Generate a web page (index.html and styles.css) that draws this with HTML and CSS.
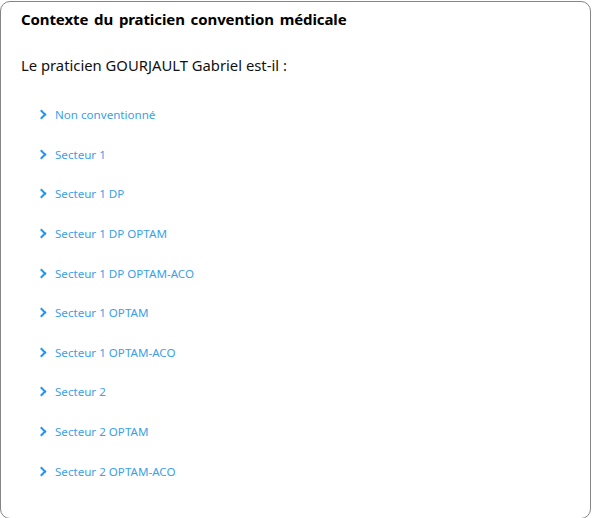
FILE: index.html
```html
<!DOCTYPE html>
<html lang="fr">
<head>
  <meta charset="UTF-8" />
  <title>Contexte du praticien convention médicale</title>
  <link rel="stylesheet" href="styles.css">
</head>
<body>
  <div class="dialog">
    <div class="title">Contexte du praticien convention médicale</div>
    <p class="question">Le praticien GOURJAULT Gabriel est-il :</p>

    <ul class="choices">
      <li><span class="chevron"></span>Non conventionné</li>
      <li><span class="chevron"></span>Secteur 1</li>
      <li><span class="chevron"></span>Secteur 1 DP</li>
      <li><span class="chevron"></span>Secteur 1 DP OPTAM</li>
      <li><span class="chevron"></span>Secteur 1 DP OPTAM-ACO</li>
      <li><span class="chevron"></span>Secteur 1 OPTAM</li>
      <li><span class="chevron"></span>Secteur 1 OPTAM-ACO</li>
      <li><span class="chevron"></span>Secteur 2</li>
      <li><span class="chevron"></span>Secteur 2 OPTAM</li>
      <li><span class="chevron"></span>Secteur 2 OPTAM-ACO</li>
    </ul>
  </div>
</body>
</html>
```

FILE: styles.css
```css
* {
  box-sizing: border-box;
}

body {
  margin: 0;
  padding: 1px 2px 0 0;
  background: white;
  font-family: 'Noto Sans', sans-serif;
  color: #111;
}

.dialog {
  height: 518px;
  border: 1.5px solid #858585;
  border-radius: 10px;
  padding: 6px 20px 0 20px;
  background: white;
}

.title {
  font-size: 15px;
  font-weight: 700;
  word-spacing: 2px;
  letter-spacing: -0.1px;
  color: #000;
  line-height: 22px;
}

.question {
  margin: 25px 0 0 0;
  font-size: 14.8px;
  line-height: 20px;
  color: #111;
}

.choices {
  list-style: none;
  margin: 20px 0 0 0;
  padding: 0 0 0 17px;
}

.choices li {
  display: flex;
  align-items: center;
  height: 39.6px;
  font-size: 11.6px;
  color: #3a9fe8;
  cursor: pointer;
}

.chevron {
  width: 7px;
  height: 7px;
  border-top: 2px solid #2196f3;
  border-right: 2px solid #2196f3;
  transform: rotate(45deg);
  margin: 0 10px 0 0;
}
```
